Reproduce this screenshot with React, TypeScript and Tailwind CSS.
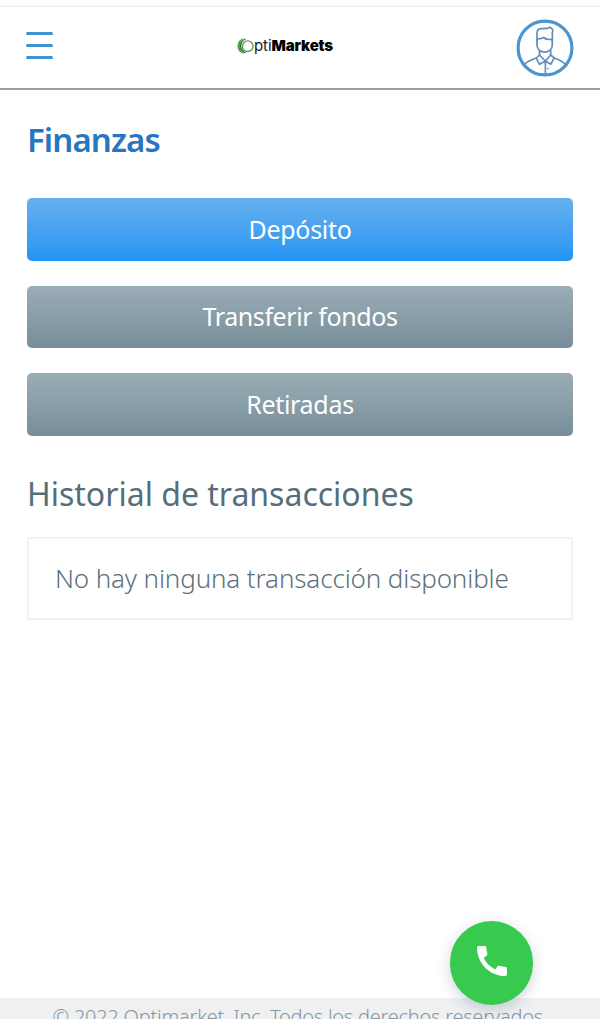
import clsx from "clsx";
import { MdCall } from "react-icons/md";

interface FinanceAction {
  label: string;
  primary?: boolean;
  spacing: string;
}

const actions: FinanceAction[] = [
  { label: "Depósito", primary: true, spacing: "tracking-[-0.3px]" },
  { label: "Transferir fondos", spacing: "tracking-[-0.4px]" },
  { label: "Retiradas", spacing: "tracking-[-0.3px]" },
];

const MenuButton = () => (
  <button type="button" aria-label="Menú" className="flex w-[27px] flex-col gap-[9px]">
    <span className="h-[3px] w-full rounded-full bg-[#3f94d0]" />
    <span className="h-[3px] w-full rounded-full bg-[#3f94d0]" />
    <span className="h-[3px] w-full rounded-full bg-[#3f94d0]" />
  </button>
);

const Logo = () => (
  <div className="flex items-center text-[15px] leading-5 text-[#161616]">
    <svg viewBox="0 0 17 18" className="h-[18px] w-[17px]" fill="none">
      <path d="M6 1.5A8 8 0 0 0 6 16.5C2.3 12.500 2.300 5.500 6 1.500Z" fill="#4c9a45" stroke="#6fae68" strokeWidth="0.6" />
      <path d="M8.500 2A7.500 7.500 0 0 0 8.500 16" stroke="#2e6b2c" strokeWidth="1.300" />
      <circle cx="10.700" cy="9.200" r="5.300" stroke="#5d9a55" strokeWidth="1.300" />
    </svg>
    <span className="tracking-[-0.1px]">pti</span>
    <span className="font-black tracking-[-0.15px] text-black">Markets</span>
  </div>
);

const Avatar = () => (
  <svg viewBox="0 0 58 58" className="h-[58px] w-[58px]" fill="none" strokeLinecap="round" strokeLinejoin="round">
    <circle cx="29" cy="29" r="26.9" stroke="#4b96d1" strokeWidth="3.2" />
    <g stroke="#648fba" strokeWidth="1.7">
      <path d="M21 22v-8c0-3 1.500-4.400 4.500-4.400 3.500 0 6 .2 8.500-1.400 2.800 1.300 3.400 3.500 2.200 5.800.4 2.500.3 5 .1 8" />
      <path d="M21 20v6c0 4.300 3.600 7.200 7.700 7.200s7.600-2.900 7.600-7.200v-5.800c-4.300.8-6.700.1-8.800-1.700-1.700 1.100-3.600 1.500-6.500 1.500" />
      <path d="M23.500 31.500V36l5.900 6 5.300-6v-4.500" />
      <path d="m23.500 36-3.200 3 3.200 6.300 5.900-3.300 5.300 3.300 3.500-6.300-3.500-3" />
      <path d="M29.400 42v12.500" />
      <path d="M20.300 39c-6 1.900-9.600 3.800-13 7.500M38.200 39c5.600 1.900 9.100 3.800 12.500 7.500" />
      <path d="M32 49.500h.1" />
    </g>
  </svg>
);

const App = () => {
  return (
    <div className="flex h-[1019px] w-full flex-col overflow-hidden bg-white pt-[5px] font-['Noto_Sans','Liberation_Sans',sans-serif]">
      <header className="flex h-[85px] shrink-0 items-center justify-between border-t-2 border-b-2 border-t-[#f1f2f2] border-b-[#969fa5] px-[26px]">
        <div className="flex w-[211px] pb-1">
          <MenuButton />
        </div>
        <div className="pb-1 font-['Inter','Liberation_Sans',sans-serif]">
          <Logo />
        </div>
        <div className="flex flex-1 justify-end">
          <Avatar />
        </div>
      </header>

      <main className="flex-1 px-[27px] pt-[28px]">
        <h1 className="text-[33px] leading-[44px] font-semibold tracking-[-0.9px] whitespace-nowrap text-[#2875c0]">
          Finanzas
        </h1>

        <div className="mt-[36px] flex flex-col gap-[25px]">
          {actions.map((action) => (
            <button
              key={action.label}
              type="button"
              className={clsx(
                "h-[62.5px] rounded-[5px] bg-linear-to-b text-[25px] text-white",
                action.spacing,
                action.primary ? "from-[#64b0ee] to-[#2194f3]" : "from-[#9badb6] to-[#778e99]"
              )}
            >
              {action.label}
            </button>
          ))}
        </div>

        <h2 className="mt-[36px] text-[32px] leading-[44px] whitespace-nowrap text-[#546e7a]">
          Historial de transacciones
        </h2>

        <div className="mt-[21px] flex h-[83px] items-center border-2 border-[#f1f2f3] px-[26px] text-[26px] font-light tracking-[-0.13px] whitespace-nowrap text-[#5c717b]">
          No hay ninguna transacción disponible
        </div>
      </main>

      <footer className="h-[21px] shrink-0 overflow-hidden bg-[#eef0f2] pt-[4px] text-center text-[20px] leading-[30px] font-light tracking-[-0.24px] whitespace-nowrap text-[#8796a0]">
        © 2022 Optimarket, Inc. Todos los derechos reservados.
      </footer>

      <button
        type="button"
        aria-label="Llamar"
        className="fixed top-[921px] left-[450px] flex h-[84px] w-[83px] items-center justify-center rounded-full bg-[#38ca4f] pb-[4px] text-white shadow-[0_4px_14px_rgba(60,80,110,0.25)]"
      >
        <MdCall className="h-[40px] w-[40px]" />
      </button>
    </div>
  );
};

export default App;
